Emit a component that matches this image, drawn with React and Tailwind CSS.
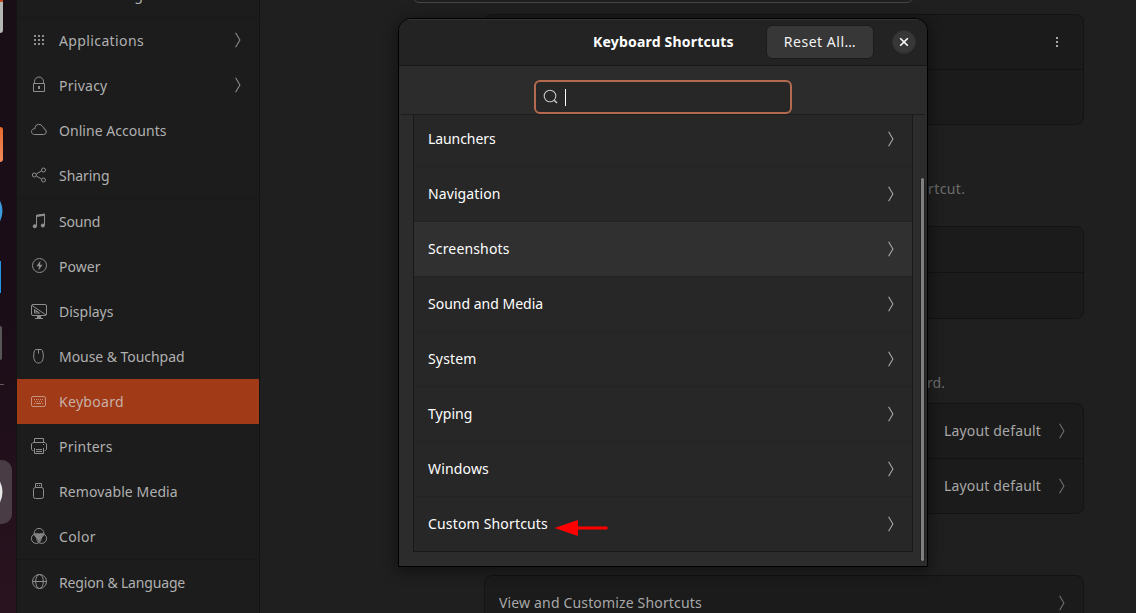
import React from 'react';

const svgProps = {
  width: 18,
  height: 18,
  viewBox: '0 0 18 18',
  fill: 'none',
  stroke: 'currentColor',
  strokeWidth: 1,
};

const icons = {
  apps: (
    <svg {...svgProps} fill="currentColor" stroke="none" shapeRendering="crispEdges">
      {[4, 8, 12].map((y) => [4, 8, 12].map((x) => <rect key={x + '-' + y} x={x} y={y} width="2" height="2" />))}
    </svg>
  ),
  lock: (
    <svg {...svgProps}>
      <path d="M3.5 7.5h11v8h-11zM4.5 7.5V5.500a4.500 4.500 0 0 1 9 0v2" />
      <rect x="8" y="10" width="2" height="3" fill="currentColor" stroke="none" />
    </svg>
  ),
  cloud: (
    <svg {...svgProps}>
      <path d="M4.5 13.5h9.2a2.8 2.8 0 0 0 .5-5.5 2.2 2.2 0 0 0-1.6-2.3A4 4 0 0 0 5 6.5c0 .4 0 .7.1 1-2.2.2-3.6 1.4-3.6 3.1s1.3 2.9 3 2.9z" />
    </svg>
  ),
  share: (
    <svg {...svgProps}>
      <circle cx="4.3" cy="9" r="2" />
      <circle cx="13.5" cy="4" r="2" />
      <circle cx="13.5" cy="14" r="2" />
      <path d="M6.300 8l5.200-3M6.300 10l5.200 3" />
    </svg>
  ),
  sound: (
    <svg {...svgProps}>
      <path d="M6.500 14V3.300l8-1.300v11.500" />
      <path d="M6.500 4l8-1.300" strokeWidth="2" />
      <circle cx="4.800" cy="14.300" r="2" fill="currentColor" stroke="none" />
      <circle cx="12.800" cy="13.500" r="2" fill="currentColor" stroke="none" />
    </svg>
  ),
  power: (
    <svg {...svgProps}>
      <circle cx="9.500" cy="8.500" r="7" />
      <path d="M10.500 3.500L6.500 9.300h2.500L8.500 13.500l4-5.800H10z" fill="currentColor" stroke="none" />
    </svg>
  ),
  display: (
    <svg {...svgProps}>
      <rect x="1.500" y="2.500" width="15" height="11" rx="1.500" />
      <path d="M2 3.500l14 9.500" />
      <path d="M4.500 7.500v3.500h5zM5.500 9.500h2" />
      <path d="M7 14h4v2h2v1H5v-1h2z" fill="currentColor" stroke="none" />
    </svg>
  ),
  mouse: (
    <svg {...svgProps}>
      <path d="M5.500 2.500h6c1.200 1 1.800 3.500 1.800 6.500 0 4-1.400 7-4.800 7s-4.800-3-4.800-7c0-3 .6-5.500 1.800-6.500zM8.500 2.500v4" />
    </svg>
  ),
  keyboard: (
    <svg {...svgProps}>
      <rect x="1.500" y="4.500" width="14" height="10" rx="1.500" />
      <path d="M4 7.500h9M5 9.500h8" strokeDasharray="1 1" />
      <path d="M4 11.500h1M6 11.500h5M12 11.500h1" />
    </svg>
  ),
  printer: (
    <svg {...svgProps}>
      <path d="M4.500 5.500v-4h9v4M3.500 13.500h-1l-1-1v-5.500l1.500-1.500h12l1.500 1.500v5.500l-1 1h-1" />
      <path d="M4.500 11v5.500h9V11M6 12.500h6M6 14.500h6" />
      <path d="M13 7.500h1" />
    </svg>
  ),
  usb: (
    <svg {...svgProps}>
      <rect x="3.500" y="5.500" width="10" height="11" rx="2" />
      <path d="M5.500 5V1.500h6V5M7 3.500h1M9 3.500h1" />
    </svg>
  ),
  color: (
    <svg {...svgProps}>
      <circle cx="9" cy="6.300" r="4.900" />
      <circle cx="6.300" cy="11.500" r="4.900" />
      <circle cx="11.700" cy="11.500" r="4.900" />
      <path d="M4.500 7.200c2.500-1 6.500-1 9 0-.5 2-1.500 3.300-2.500 4.300-.5 2-1.200 3-2 3.600-.8-.6-1.500-1.600-2-3.600-1-1-2-2.300-2.500-4.300z" fill="currentColor" stroke="none" opacity="0.85" />
    </svg>
  ),
  globe: (
    <svg {...svgProps}>
      <circle cx="9.500" cy="8.500" r="7" />
      <ellipse cx="9.500" cy="8.500" rx="3.800" ry="7" />
      <path d="M2.500 8.500h14" />
    </svg>
  ),
};

function Chevron({ className }) {
  return (
    <svg width="6" height="16" viewBox="0 0 6 16" fill="none" stroke="currentColor" strokeWidth="1.1" className={className}>
      <path d="M.6.7L4.900 8 .6 15.300" />
    </svg>
  );
}

const groups = [
  [
    { icon: 'apps', label: 'Applications', track: 'tracking-[0.38px]', more: true },
    { icon: 'lock', label: 'Privacy', track: 'tracking-[0.26px]', more: true },
    { icon: 'cloud', label: 'Online Accounts', track: 'tracking-[0.04px]' },
    { icon: 'share', label: 'Sharing', track: 'tracking-[-0.05px]' },
  ],
  [
    { icon: 'sound', label: 'Sound', track: 'tracking-[-0.2px]' },
    { icon: 'power', label: 'Power', track: 'tracking-[0.03px]' },
    { icon: 'display', label: 'Displays', track: 'tracking-[0px]' },
    { icon: 'mouse', label: 'Mouse & Touchpad', track: 'tracking-[-0.05px]' },
    { icon: 'keyboard', label: 'Keyboard', track: 'tracking-[0.3px]', active: true },
    { icon: 'printer', label: 'Printers', track: 'tracking-[0.22px]' },
    { icon: 'usb', label: 'Removable Media', track: 'tracking-[0.1px]' },
    { icon: 'color', label: 'Color', track: 'tracking-[0.36px]' },
  ],
  [{ icon: 'globe', label: 'Region & Language', track: 'tracking-[-0.17px]' }],
];

function SidebarItem({ icon, label, track, more, active }) {
  return (
    <div className={`flex h-[45px] shrink-0 items-center pl-[13px] pr-[18px] ${active ? 'bg-[#a03a17]' : ''}`}>
      <span className={`relative -top-px ${active ? 'text-[#c6917d]' : 'text-[#8e8e8e]'}`}>{icons[icon]}</span>
      <span className={`ml-[11px] flex-1 whitespace-nowrap ${track} ${active ? 'text-[#c8b0a7]' : 'text-[#b0b0b0]'}`}>{label}</span>
      {more && <Chevron className="mb-px text-[#8a8a8a]" />}
    </div>
  );
}

function Dock() {
  return (
    <div className="flex w-4 shrink-0 flex-col overflow-hidden bg-linear-to-b from-[#190d16] via-[#1a0d17] to-[#29131f]">
      <div className="h-[33px] w-[3px] rounded-br-[3px] border-t-2 border-[#c04a1c] bg-[#b5b5b3]" />
      <div className="mt-[94px] h-[35px] w-[3px] rounded-r-[3px] bg-linear-to-b from-[#e86a2c] to-[#f08a5c]" />
      <svg className="mt-[38px] shrink-0" width="3" height="22" viewBox="0 0 3 22" fill="#3b9bdc">
        <path d="M0 0.500Q5 11 0 21.500z" />
      </svg>
      <div className="mt-[39px] h-[32px] w-px bg-[#2196e8]" />
      <div className="mt-[33px] h-[34px] w-[2px] rounded-r-[3px] bg-[#565656]" />
      <div className="mt-[24px] h-px w-1 bg-[#625a60]" />
      <div className="mt-[75px] flex h-16 w-3 shrink-0 items-center rounded-r-[10px] bg-[#4a3c44]">
        <svg width="3" height="22" viewBox="0 0 3 22" fill="#e8e8e8">
          <path d="M0 0.500Q5 11 0 21.500z" />
        </svg>
      </div>
    </div>
  );
}

function Sidebar() {
  return (
    <div className="flex w-[244px] shrink-0 flex-col overflow-hidden border-x border-[#131313] bg-[#1c1c1c]">
      <div className="flex h-[17px] shrink-0 items-end pl-[42px]">
        <span className="mb-[12px] whitespace-nowrap tracking-[0.2px] text-[#b0b0b0]">Multitasking</span>
      </div>
      {groups.map((group, i) => (
        <div key={i} className="flex shrink-0 flex-col border-t border-[#181818]">
          {group.map((item) => (
            <SidebarItem key={item.label} {...item} />
          ))}
        </div>
      ))}
    </div>
  );
}

const card = 'ml-[224px] w-[600px] shrink-0 divide-y divide-[#131313] rounded-[8px] border border-[#131313] bg-[#1b1b1b]';

function LayoutRow() {
  return (
    <div className="flex h-[54px] items-center justify-end pr-[18px] first:h-[55px]">
      <span className="tracking-[0.17px] text-[#a8a8a8]">Layout default</span>
      <Chevron className="ml-[18px] text-[#707070]" />
    </div>
  );
}

function MainPanel() {
  return (
    <div className="flex flex-1 flex-col overflow-hidden bg-[#1f1f1f]">
      <div className="-mt-5 ml-[153px] h-[23px] w-[500px] shrink-0 rounded-[6px] border border-[#444444]" />
      <div className={`mt-[11px] ${card}`}>
        <div className="flex h-[55px] items-center justify-end pr-[25px]">
          <svg width="2" height="10" viewBox="0 0 2 10" fill="#a8a8a8">
            <path d="M0 0h2v2H0zM0 4h2v2H0zM0 8h2v2H0z" />
          </svg>
        </div>
        <div className="h-[54px]" />
      </div>
      <div className="flex h-[101px] shrink-0 items-center pb-0 pt-[26px]">
        <span className="ml-[668px] tracking-[0.4px] text-[#6d6d6d]">rtcut.</span>
      </div>
      <div className={card}>
        <div className="h-[46px]" />
        <div className="h-[45px]" />
      </div>
      <div className="flex h-[84px] shrink-0 items-center pt-[43px]">
        <span className="ml-[667px] tracking-[0.05px] text-[#6d6d6d]">rd.</span>
      </div>
      <div className={card}>
        <LayoutRow />
        <LayoutRow />
      </div>
      <div className={`mt-[61px] ${card}`}>
        <div className="flex h-[54px] items-center justify-between pl-[14px] pr-[18px]">
          <span className="tracking-[0.16px] text-[#a8a8a8]">View and Customize Shortcuts</span>
          <Chevron className="text-[#707070]" />
        </div>
      </div>
    </div>
  );
}

const sections = [
  { label: 'Launchers', track: 'tracking-[-0.08px]' },
  { label: 'Navigation', track: 'tracking-[0.1px]' },
  { label: 'Screenshots', track: 'tracking-[0.15px]', hovered: true },
  { label: 'Sound and Media', track: 'tracking-[0px]' },
  { label: 'System', track: 'tracking-[0.15px]' },
  { label: 'Typing', track: 'tracking-[0.06px]' },
  { label: 'Windows', track: 'tracking-[0.17px]' },
  { label: 'Custom Shortcuts', track: 'tracking-[0.17px]', arrow: true },
];

function RedArrow() {
  return (
    <svg width="54" height="18" viewBox="0 0 54 18" fill="#ff0000" className="relative top-[4px] ml-[6px]">
      <path d="M0.5 9L24 1v6.500h29.500v3H24V17z" />
    </svg>
  );
}

function ShortcutsDialog() {
  return (
    <div className="absolute left-[398px] top-[18px] flex h-[549px] w-[530px] flex-col overflow-hidden rounded-t-[13px] border border-black bg-[#2c2c2c] text-white shadow-[0_3px_14px_2px_rgba(0,0,0,0.4)]">
      <div className="flex h-[47px] shrink-0 items-center border-b border-t border-b-[#171717] border-t-[#333333] bg-[#232323] pb-px pr-[11px]">
        <span className="ml-[194px] w-[173px] whitespace-nowrap font-bold tracking-[0.2px]">Keyboard Shortcuts</span>
        <button className="h-[34px] w-[108px] rounded-[6px] border border-[#1b1b1b] bg-[#373737] tracking-[0.52px] text-[#f2f2f2]">Reset All…</button>
        <button className="ml-auto flex size-6 items-center justify-center rounded-full border border-[#303030] bg-[#373737]">
          <svg width="10" height="10" viewBox="0 0 10 10" stroke="#ffffff" strokeWidth="1.6">
            <path d="M1.200 1.200l7.600 7.600M8.800 1.200L1.200 8.800" />
          </svg>
        </button>
      </div>
      <div className="mx-0.5 flex h-[49px] shrink-0 justify-center border-b border-[#1d1d1d] pt-[14px]">
        <div className="flex h-[34px] w-[258px] items-center rounded-[6px] border-2 border-[#b5694f] bg-[#272727] pl-[7px]">
          <svg width="16" height="16" viewBox="0 0 16 16" fill="none" stroke="#c4c4c4" strokeWidth="1.1">
            <circle cx="7" cy="7" r="5.800" />
            <path d="M11.200 11.200l2.800 2.800" strokeWidth="1.600" />
          </svg>
          <div className="ml-1.5 h-[17px] w-px bg-white" />
        </div>
      </div>
      <div className="flex min-h-0 flex-1">
        <div className="ml-[14px] flex h-[437px] w-[500px] flex-col justify-end border-x border-b border-[#191919] bg-[#272727]">
          {sections.map((s, i) => (
            <div
              key={s.label}
              className={`flex shrink-0 items-center pl-[14px] pr-[18px] ${i === 0 ? 'h-[51px] pb-[3px]' : 'h-[55px] border-t border-[#232323]'} ${s.hovered ? 'bg-[#303030]' : ''}`}
            >
              <span className={`whitespace-nowrap ${s.track}`}>{s.label}</span>
              {s.arrow && <RedArrow />}
              <Chevron className="ml-auto text-[#a8a8a8]" />
            </div>
          ))}
        </div>
        <div className="ml-[7px] mt-[62px] h-[385px] w-[5px] rounded-full border border-[#222222] bg-[#808080]" />
      </div>
    </div>
  );
}

export default function App() {
  return (
    <div className="relative flex h-[613px] w-[1136px] overflow-hidden bg-[#1f1f1f] font-['Noto_Sans',sans-serif] text-[14px] leading-[20px]">
      <Dock />
      <Sidebar />
      <MainPanel />
      <ShortcutsDialog />
    </div>
  );
}
